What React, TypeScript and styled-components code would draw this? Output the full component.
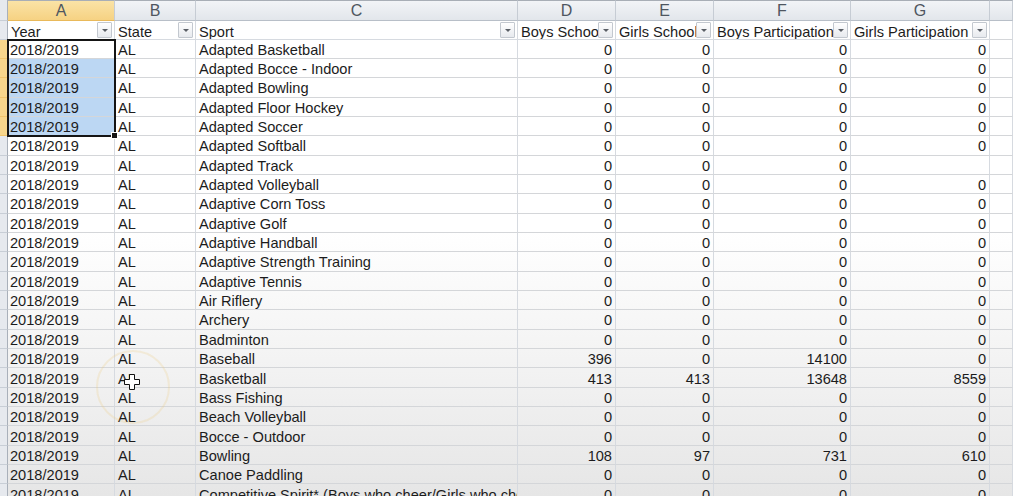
import React from "react";
import styled, { createGlobalStyle } from "styled-components";

const GlobalStyle = createGlobalStyle`
  html, body {
    margin: 0;
    padding: 0;
    background: #ffffff;
    overflow: hidden;
  }
  body {
    font-family: "Liberation Sans", Arial, sans-serif;
  }
`;

const COLS = "8px 107px 81px 322px 98px 98px 137px 139px 1fr";

const Page = styled.div`
  position: relative;
  width: 1013px;
  height: 496px;
  overflow: hidden;
  background: linear-gradient(
    to bottom,
    #ffffff 0px,
    #ffffff 230px,
    #f3f3f3 360px,
    #e6e6e6 496px
  );
`;

const Sheet = styled.div`
  display: grid;
  grid-template-columns: ${COLS};
  grid-template-rows: 20.5px 19px repeat(24, 19.35px);
  font-family: "Liberation Sans", Arial, sans-serif;
  font-size: 14.6px;
  color: #1c1c1c;
`;

const ColHeader = styled.div<{ $active?: boolean }>`
  display: flex;
  align-items: center;
  justify-content: center;
  box-sizing: border-box;
  padding-top: 2px;
  border-top: 1px solid #a8aeb6;
  border-right: 1px solid #c6ccd4;
  border-bottom: 1px solid ${(p) => (p.$active ? "#e9b95a" : "#b8bfc8")};
  background: ${(p) =>
    p.$active
      ? "linear-gradient(#fae3a6, #f6d283)"
      : "linear-gradient(#f2f4f7, #e2e6eb)"};
  color: #4e5660;
  font-size: 16px;
  overflow: hidden;
`;

const RowHeader = styled.div<{ $active?: boolean }>`
  box-sizing: border-box;
  border-right: 1px solid ${(p) => (p.$active ? "#e2b45a" : "#a9b0ba")};
  border-bottom: 1px solid ${(p) => (p.$active ? "#f0c56e" : "#c8ced6")};
  background: ${(p) => (p.$active ? "#f7d68c" : "#e6e9ee")};
`;

const FilterCell = styled.div`
  display: flex;
  align-items: center;
  box-sizing: border-box;
  padding: 1px 2px 0 3px;
  border-right: 1px solid #d6dae0;
  border-bottom: 1px solid #d6dae0;
  background: #ffffff;
  min-width: 0;
  overflow: hidden;
`;

const FilterLabel = styled.span`
  flex: 1;
  min-width: 0;
  white-space: nowrap;
  overflow: hidden;
  line-height: 19px;
  padding-top: 4px;
`;

const FilterButton = styled.span`
  flex-shrink: 0;
  width: 15px;
  height: 16px;
  box-sizing: border-box;
  display: flex;
  align-items: center;
  justify-content: center;
  border: 1px solid #c3c8cf;
  border-radius: 1px;
  background: linear-gradient(#ffffff, #e7eaee);
  &::after {
    content: "";
    width: 0;
    height: 0;
    border-left: 3px solid transparent;
    border-right: 3px solid transparent;
    border-top: 3px solid #5a5f66;
  }
`;

const Cell = styled.div<{ $num?: boolean; $selected?: boolean }>`
  display: flex;
  align-items: center;
  justify-content: ${(p) => (p.$num ? "flex-end" : "flex-start")};
  box-sizing: border-box;
  padding: ${(p) => (p.$num ? "3px 3px 0 0" : "3px 0 0 3px")};
  border-right: 1px solid #d6dae0;
  border-bottom: 1px solid #d4d6d9;
  background: ${(p) => (p.$selected ? "#bcd7f3" : "transparent")};
  white-space: nowrap;
  overflow: hidden;
  line-height: 19px;
  min-width: 0;
`;

const YearCell = styled(Cell)`
  padding-left: 2px;
`;

const SelectionBox = styled.div`
  position: absolute;
  left: 7px;
  top: 38.5px;
  width: 109px;
  height: 98.5px;
  box-sizing: border-box;
  border: 2px solid #151515;
  pointer-events: none;
`;

const FillHandle = styled.div`
  position: absolute;
  right: -4px;
  bottom: -4px;
  width: 5px;
  height: 5px;
  background: #151515;
  border: 1px solid #ffffff;
`;

const Ring = styled.div`
  position: absolute;
  left: 96px;
  top: 350px;
  width: 70px;
  height: 70px;
  border-radius: 50%;
  border: 2px solid rgba(238, 200, 120, 0.22);
  pointer-events: none;
`;

const CursorIcon = styled.svg`
  position: absolute;
  left: 124px;
  top: 374px;
  width: 16px;
  height: 16px;
  pointer-events: none;
`;

type DataRow = [string, string, string, string, string];

const rows: DataRow[] = [
  ["Adapted Basketball", "0", "0", "0", "0"],
  ["Adapted Bocce - Indoor", "0", "0", "0", "0"],
  ["Adapted Bowling", "0", "0", "0", "0"],
  ["Adapted Floor Hockey", "0", "0", "0", "0"],
  ["Adapted Soccer", "0", "0", "0", "0"],
  ["Adapted Softball", "0", "0", "0", "0"],
  ["Adapted Track", "0", "0", "0", ""],
  ["Adapted Volleyball", "0", "0", "0", "0"],
  ["Adaptive Corn Toss", "0", "0", "0", "0"],
  ["Adaptive Golf", "0", "0", "0", "0"],
  ["Adaptive Handball", "0", "0", "0", "0"],
  ["Adaptive Strength Training", "0", "0", "0", "0"],
  ["Adaptive Tennis", "0", "0", "0", "0"],
  ["Air Riflery", "0", "0", "0", "0"],
  ["Archery", "0", "0", "0", "0"],
  ["Badminton", "0", "0", "0", "0"],
  ["Baseball", "396", "0", "14100", "0"],
  ["Basketball", "413", "413", "13648", "8559"],
  ["Bass Fishing", "0", "0", "0", "0"],
  ["Beach Volleyball", "0", "0", "0", "0"],
  ["Bocce - Outdoor", "0", "0", "0", "0"],
  ["Bowling", "108", "97", "731", "610"],
  ["Canoe Paddling", "0", "0", "0", "0"],
  ["Competitive Spirit* (Boys who cheer/Girls who cheer)", "0", "0", "0", "0"],
];

const letters = ["A", "B", "C", "D", "E", "F", "G", ""];
const headers = [
  "Year",
  "State",
  "Sport",
  "Boys School",
  "Girls School",
  "Boys Participation",
  "Girls Participation",
];

export default function App() {
  return (
    <>
      <GlobalStyle />
      <Page>
        <Sheet>
          <RowHeader />
          {letters.map((l, i) => (
            <ColHeader key={"c" + i} $active={l === "A"}>
              {l}
            </ColHeader>
          ))}

          <RowHeader />
          {headers.map((h) => (
            <FilterCell key={h}>
              <FilterLabel>{h}</FilterLabel>
              <FilterButton />
            </FilterCell>
          ))}
          <Cell />

          {rows.map((r, i) => {
            const sel = i >= 1 && i <= 4;
            const active = i <= 4;
            return (
              <React.Fragment key={i}>
                <RowHeader $active={active} />
                <YearCell $selected={sel}>2018/2019</YearCell>
                <Cell>AL</Cell>
                <Cell>{r[0]}</Cell>
                <Cell $num>{r[1]}</Cell>
                <Cell $num>{r[2]}</Cell>
                <Cell $num>{r[3]}</Cell>
                <Cell $num>{r[4]}</Cell>
                <Cell />
              </React.Fragment>
            );
          })}
        </Sheet>

        <SelectionBox>
          <FillHandle />
        </SelectionBox>

        <Ring />
        <CursorIcon viewBox="0 0 16 16">
          <path
            d="M5.5 0.5h5v5h5v5h-5v5h-5v-5h-5v-5h5z"
            fill="#ffffff"
            stroke="#111111"
            strokeWidth="1"
          />
        </CursorIcon>
      </Page>
    </>
  );
}
